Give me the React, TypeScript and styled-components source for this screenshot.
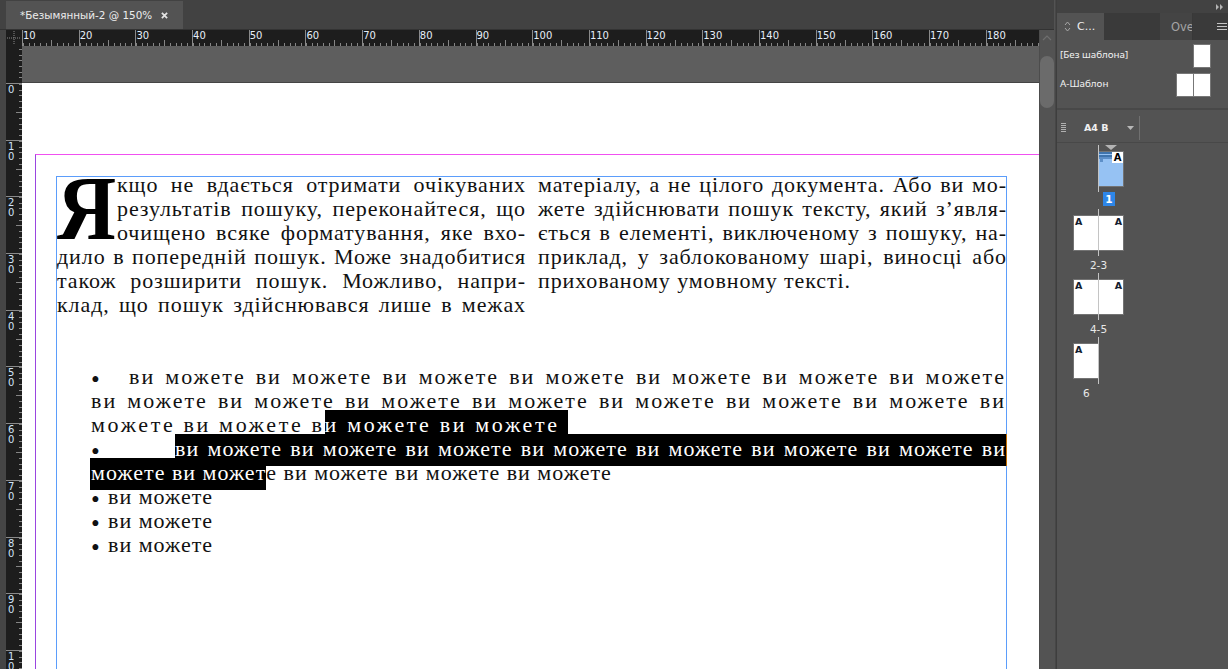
import React from 'react';
import styled, {createGlobalStyle} from "styled-components";

const GlobalStyle = createGlobalStyle`
  html, body {
    margin: 0;
    padding: 0;
    background: #535353;
    overflow: hidden;
  }
  * {
    box-sizing: border-box;
  }
`

const UI_FONT = `"DejaVu Sans", sans-serif`
const PANEL_FONT = `"Noto Sans", sans-serif`
const DOC_FONT = `"Liberation Serif", serif`
const RULER_STEP = 56.7

const H_MARKS = [10, 20, 30, 40, 50, 60, 70, 80, 90, 100, 110, 120, 130, 140, 150, 160, 170, 180]
const V_MARKS = [0, 10, 20, 30, 40, 50, 60, 70, 80, 90, 100]

const LEFT_COLUMN = [
    "кщо не вдається отримати очікуваних",
    "результатів пошуку, переконайтеся, що",
    "очищено всяке форматування, яке вхо-",
    "дило в попередній пошук. Може знадобитися",
    "також розширити пошук. Можливо, напри-",
    "клад, що пошук здійснювався лише в межах",
]

const RIGHT_COLUMN = [
    "матеріалу, а не цілого документа. Або ви мо-",
    "жете здійснювати пошук тексту, який з’явля-",
    "ється в елементі, виключеному з пошуку, на-",
    "приклад, у заблокованому шарі, виносці або",
]

const SEVEN = "ви можете ви можете ви можете ви можете ви можете ви можете ви можете"

export default function App() {
    return (
        <Screen>
            <GlobalStyle/>
            <DocColumn>
                <TabBar>
                    <Tab>
                        <TabTitle>*Безымянный-2 @ 150%</TabTitle>
                        <TabClose viewBox="0 0 8 8">
                            <path d="M1 1 L7 7 M7 1 L1 7" stroke="#e4e4e4" strokeWidth="2"/>
                        </TabClose>
                    </Tab>
                </TabBar>
                <Workspace>
                    <Gutter/>
                    <RulerGrid>
                        <Corner>
                            <svg width="14" height="14" viewBox="0 0 14 14">
                                <path d="M0 7 H14 M7 0 V14" stroke="#8a8a8a" strokeDasharray="1 1" fill="none"/>
                            </svg>
                        </Corner>
                        <HRuler>
                            {H_MARKS.map(mark => (
                                <HCell key={mark}>{mark}</HCell>
                            ))}
                        </HRuler>
                        <VRuler>
                            <VStub/>
                            {V_MARKS.map(mark => (
                                <VCell key={mark}>
                                    {String(mark).split("").map((digit, i) => <span key={i}>{digit}</span>)}
                                </VCell>
                            ))}
                        </VRuler>
                        <Viewport>
                            <Pasteboard/>
                            <Page>
                                <MarginGuide>
                                    <TextFrame>
                                        <Columns>
                                            <Column>
                                                <DropCap>Я</DropCap>
                                                {LEFT_COLUMN.map(line => <Line key={line}>{line}</Line>)}
                                            </Column>
                                            <Column>
                                                {RIGHT_COLUMN.map(line => <Line key={line}>{line}</Line>)}
                                                <LastLine>прихованому умовному тексті.</LastLine>
                                            </Column>
                                        </Columns>
                                        <BulletList>
                                            <BulletRow>
                                                <Bullet $width={38}>•</Bullet>
                                                <WideLine>{SEVEN}</WideLine>
                                            </BulletRow>
                                            <WideLine>{SEVEN} ви</WideLine>
                                            <WideLast>
                                                можете ви можете в<Selected>и можете ви можете </Selected>
                                            </WideLast>
                                            <BulletRow>
                                                <Bullet $width={84}>•</Bullet>
                                                <SelectedLine>
                                                    <Selected $edge>{SEVEN} ви</Selected>
                                                </SelectedLine>
                                            </BulletRow>
                                            <PlainLast>
                                                <Selected $first>можете ви может</Selected>е ви можете ви можете ви можете
                                            </PlainLast>
                                            <BulletRow>
                                                <Bullet $width={17}>•</Bullet>
                                                <PlainLast>ви можете</PlainLast>
                                            </BulletRow>
                                            <BulletRow>
                                                <Bullet $width={17}>•</Bullet>
                                                <PlainLast>ви можете</PlainLast>
                                            </BulletRow>
                                            <BulletRow>
                                                <Bullet $width={17}>•</Bullet>
                                                <PlainLast>ви можете</PlainLast>
                                            </BulletRow>
                                        </BulletList>
                                    </TextFrame>
                                </MarginGuide>
                            </Page>
                        </Viewport>
                    </RulerGrid>
                    <ScrollTrack>
                        <ScrollArrow viewBox="0 0 10 6">
                            <path d="M1 5 L5 1 L9 5" stroke="#6f6f6f" strokeWidth="1.2" fill="none"/>
                        </ScrollArrow>
                        <ScrollThumb/>
                    </ScrollTrack>
                </Workspace>
            </DocColumn>

            <Panel>
                <PanelStrip>
                    <svg width="8" height="6" viewBox="0 0 8 6">
                        <path d="M0 0 L3 3 L0 6 Z M4 0 L7 3 L4 6 Z" fill="#b4b4b4"/>
                    </svg>
                </PanelStrip>
                <PanelTabs>
                    <ActiveTab>
                        <svg width="7" height="11" viewBox="0 0 7 11">
                            <path d="M1 4 L3.5 1 L6 4 M1 7 L3.5 10 L6 7" stroke="#a8a8a8" fill="none"/>
                        </svg>
                        С...
                    </ActiveTab>
                    <TabSpacer/>
                    <InactiveTab>Ove</InactiveTab>
                    <MenuIcon viewBox="0 0 10 7">
                        <path d="M0 .5 H10 M0 3.5 H10 M0 6.5 H10" stroke="#c4c4c4"/>
                    </MenuIcon>
                </PanelTabs>
                <MasterList>
                    <MasterRow>
                        <MasterName>[Без шаблона]</MasterName>
                        <MasterSheet/>
                    </MasterRow>
                    <MasterRow>
                        <MasterName>А-Шаблон</MasterName>
                        <MasterSheet/>
                        <MasterSheet $joined/>
                    </MasterRow>
                </MasterList>
                <SizeBar>
                    <Grip viewBox="0 0 5 9">
                        <path d="M0 .5 H5 M0 2.5 H5 M0 4.5 H5 M0 6.5 H5 M0 8.5 H5" stroke="#b0b0b0"/>
                    </Grip>
                    <SizeName>А4 В</SizeName>
                    <Caret viewBox="0 0 7 4">
                        <path d="M0 0 H7 L3.5 4 Z" fill="#b8b8b8"/>
                    </Caret>
                    <SizeDivider/>
                </SizeBar>
                <SpreadList>
                    <Spread>
                        <SpreadRow>
                            <PageSlot/>
                            <Spine/>
                            <PageSlot>
                                <CurrentMarker viewBox="0 0 12 5">
                                    <path d="M0 0 H12 L6 5 Z" fill="#b4b4b4"/>
                                </CurrentMarker>
                                <ActiveSheet>
                                    <PreviewStripes viewBox="0 0 24 12">
                                        <path d="M0 0 H14 V2 H0 Z M0 3 H17 V5 H0 Z" fill="#3f74ad"/>
                                        <path d="M0 5 H20 V7 H0 Z M1 7 H4 V10 H1 Z" fill="#5d8fc8"/>
                                    </PreviewStripes>
                                    <ActiveMaster>A</ActiveMaster>
                                </ActiveSheet>
                            </PageSlot>
                        </SpreadRow>
                        <SpreadLabel><ActiveNumber>1</ActiveNumber></SpreadLabel>
                    </Spread>
                    <Spread>
                        <SpreadRow>
                            <PageSlot><Sheet><MasterMark>A</MasterMark></Sheet></PageSlot>
                            <Spine/>
                            <PageSlot><Sheet $right><MasterMark>A</MasterMark></Sheet></PageSlot>
                        </SpreadRow>
                        <SpreadLabel>2-3</SpreadLabel>
                    </Spread>
                    <Spread>
                        <SpreadRow>
                            <PageSlot><Sheet><MasterMark>A</MasterMark></Sheet></PageSlot>
                            <Spine/>
                            <PageSlot><Sheet $right><MasterMark>A</MasterMark></Sheet></PageSlot>
                        </SpreadRow>
                        <SpreadLabel>4-5</SpreadLabel>
                    </Spread>
                    <Spread>
                        <SpreadRow>
                            <PageSlot><Sheet><MasterMark>A</MasterMark></Sheet></PageSlot>
                            <Spine/>
                            <PageSlot/>
                        </SpreadRow>
                        <SpreadLabel $left>6</SpreadLabel>
                    </Spread>
                </SpreadList>
            </Panel>
        </Screen>
    );
};


const Screen = styled.div`
  width: 1228px;
  height: 669px;
  display: flex;
  overflow: hidden;
  background: #535353;
  font-family: ${UI_FONT};
`

const DocColumn = styled.div`
  width: 1054px;
  display: flex;
  flex-direction: column;
`

const TabBar = styled.div`
  height: 30px;
  padding: 1px 0 0 6px;
  background: #424242;
  display: flex;
  border-bottom: 1px solid #333;
`

const Tab = styled.div`
  width: 177px;
  background: #535353;
  display: flex;
  align-items: center;
  padding-left: 14px;
`

const TabTitle = styled.span`
  color: #ececec;
  font-size: 10.4px;
  width: 141px;
  white-space: nowrap;
`

const TabClose = styled.svg`
  width: 7px;
  height: 7px;
`

const Workspace = styled.div`
  flex: 1;
  display: flex;
  min-height: 0;
`

const Gutter = styled.div`
  width: 6px;
  background: #454545;
`

const RulerGrid = styled.div`
  width: 1033px;
  display: grid;
  grid-template-columns: 16px 1fr;
  grid-template-rows: 16px 1fr;
  min-height: 0;
`

const Corner = styled.div`
  background: #1d1d1d;
  display: flex;
  align-items: center;
  justify-content: center;
`

const HRuler = styled.div`
  background: #1d1d1d;
  display: flex;
  overflow: hidden;
`

const HCell = styled.div`
  flex: 0 0 ${RULER_STEP}px;
  height: 16px;
  border-left: 1px solid #8a8a8a;
  color: #e6eef8;
  font-size: 10px;
  line-height: 11px;
  background-image:
    repeating-linear-gradient(90deg, #858585 0 1px, transparent 1px ${RULER_STEP / 10}px),
    linear-gradient(90deg, transparent 27.6px, #858585 27.6px 28.6px, transparent 28.6px);
  background-size: 100% 3px, 100% 6px;
  background-position: 0 100%, 0 100%;
  background-repeat: no-repeat;
`

const VRuler = styled.div`
  background: #1d1d1d;
  display: flex;
  flex-direction: column;
  overflow: hidden;
  min-height: 0;
`

const VStub = styled.div`
  flex: 0 0 37px;
  background-image: repeating-linear-gradient(0deg, transparent 0 4.67px, #858585 4.67px 5.67px);
  background-size: 3px 100%;
  background-position: 100% 0;
  background-repeat: no-repeat;
`

const VCell = styled.div`
  flex: 0 0 ${RULER_STEP}px;
  border-top: 1px solid #8a8a8a;
  padding: 1px 0 0 2px;
  display: flex;
  flex-direction: column;
  color: #cfe3f8;
  font-size: 10px;
  line-height: 10px;
  background-image:
    repeating-linear-gradient(180deg, #858585 0 1px, transparent 1px ${RULER_STEP / 10}px),
    linear-gradient(180deg, transparent 27.6px, #858585 27.6px 28.6px, transparent 28.6px);
  background-size: 3px 100%, 6px 100%;
  background-position: 100% 0, 100% 0;
  background-repeat: no-repeat;
`

const Viewport = styled.div`
  display: flex;
  flex-direction: column;
  min-height: 0;
  overflow: hidden;
`

const Pasteboard = styled.div`
  flex: 0 0 37px;
  background: #5e5e5e;
  border-bottom: 1px solid #444;
`

const Page = styled.div`
  flex: 1;
  background: #fff;
  display: flex;
  padding: 71px 0 0 13px;
  min-height: 0;
`

const MarginGuide = styled.div`
  flex: 1;
  display: flex;
  padding: 21px 0 0 20px;
  border-top: 1px solid #f050f0;
  border-left: 1px solid #9a45e0;
`

const TextFrame = styled.div`
  width: 951px;
  border: 1px solid #5b9dfb;
  border-bottom: none;
  color: #111;
  font-family: ${DOC_FONT};
  font-size: 22px;
  line-height: 24px;
  letter-spacing: 0.9px;
`

const Columns = styled.div`
  display: flex;
  gap: 12px;
  margin-top: -4px;
`

const Column = styled.div`
  flex: 0 0 469px;
`

const DropCap = styled.div`
  float: left;
  width: 60px;
  height: 72px;
  font-size: 92px;
  font-weight: bold;
  letter-spacing: 0;
  line-height: 70px;
  color: #000;
  transform: scaleX(0.89);
  transform-origin: 0 0;
`

const Line = styled.div`
  text-align: justify;
  text-align-last: justify;
`

const LastLine = styled.div`
  text-align: left;
`

const BulletList = styled.div`
  margin-top: 48px;
  padding-left: 34px;
  letter-spacing: 1px;
`

const BulletRow = styled.div`
  display: flex;
`

const Bullet = styled.span<{ $width: number }>`
  flex: 0 0 ${props => props.$width}px;
  height: 24px;
  font-size: 25px;
  line-height: 29px;
  letter-spacing: 0;
`

const WideLine = styled.div`
  flex: 1;
  letter-spacing: 2px;
  text-align: justify;
  text-align-last: justify;
`

const WideLast = styled.div`
  letter-spacing: 2.65px;
`

const SelectedLine = styled.div`
  flex: 1;
  text-align: justify;
  text-align-last: justify;
`

const PlainLast = styled.div`
  white-space: pre-wrap;
`

const Selected = styled.span<{ $edge?: boolean; $first?: boolean }>`
  background: #000;
  color: #fff;
  padding: 2px 0 5px;
  white-space: pre-wrap;
  ${props => props.$edge && `box-shadow: 1px 0 0 #c46f00;`}
  ${props => props.$first && `margin-left: -1px; padding-left: 1px;`}
`

const ScrollTrack = styled.div`
  flex: 1;
  background: #535353;
  display: flex;
  flex-direction: column;
  align-items: center;
  padding-top: 5px;
  border-left: 1px solid #4c4c4c;
`

const ScrollArrow = styled.svg`
  width: 10px;
  height: 6px;
`

const ScrollThumb = styled.div`
  width: 14px;
  height: 52px;
  margin-top: 15px;
  border-radius: 7px;
  background: #6b6b6b;
`

const Panel = styled.div`
  flex: 1;
  display: flex;
  flex-direction: column;
  margin-left: 2px;
  border-left: 1px solid #3e3e3e;
  box-shadow: -1px 0 0 #474747;
  color: #e4e4e4;
  font-size: 10px;
`

const PanelStrip = styled.div`
  height: 13px;
  background: #424242;
  display: flex;
  align-items: center;
  justify-content: flex-end;
  padding-right: 4px;
`

const PanelTabs = styled.div`
  height: 27px;
  background: #3a3a3a;
  display: flex;
`

const ActiveTab = styled.div`
  width: 47px;
  background: #535353;
  display: flex;
  align-items: center;
  gap: 6px;
  padding-left: 7px;
  font-size: 11px;
  color: #eee;
`

const TabSpacer = styled.div`
  width: 56px;
`

const InactiveTab = styled.div`
  width: 33px;
  background: #444;
  border-right: 1px solid #383838;
  display: flex;
  align-items: center;
  padding-left: 11px;
  overflow: hidden;
  color: #a4a4a4;
  font-size: 11.5px;
`

const MenuIcon = styled.svg`
  width: 10px;
  height: 7px;
  margin: 10px 0 0 24px;
`

const MasterList = styled.div`
  height: 70px;
  padding: 1px 17px 0 3px;
  border-bottom: 2px solid #484848;
  display: flex;
  flex-direction: column;
`

const MasterRow = styled.div`
  height: 29px;
  display: flex;
  align-items: center;
`

const MasterName = styled.span`
  flex: 1;
  margin-bottom: 3px;
  color: #f0f0f0;
  font-family: ${PANEL_FONT};
  font-size: 9.8px;
`

const MasterSheet = styled.div<{ $joined?: boolean }>`
  width: 18px;
  height: 24px;
  background: #fff;
  border: 1px solid #777;
  ${props => props.$joined && `margin-left: -1px;`}
`

const SizeBar = styled.div`
  height: 33px;
  padding: 3px 0 0 4px;
  border-bottom: 1px solid #484848;
  display: flex;
  align-items: center;
`

const Grip = styled.svg`
  width: 5px;
  height: 9px;
`

const SizeName = styled.span`
  width: 43px;
  margin-left: 18px;
  color: #f0f0f0;
  font-size: 9.5px;
  font-weight: bold;
`

const Caret = styled.svg`
  width: 7px;
  height: 4px;
`

const SizeDivider = styled.div`
  width: 1px;
  height: 24px;
  margin-left: 5px;
  background: #707070;
`

const SpreadList = styled.div`
  padding: 2px 0 0 16px;
  display: flex;
  flex-direction: column;
`

const Spread = styled.div`
  width: 51px;
  height: 64px;
  display: flex;
  flex-direction: column;
`

const SpreadRow = styled.div`
  height: 47px;
  display: flex;
`

const PageSlot = styled.div`
  position: relative;
  flex: 0 0 25px;
  display: flex;
  align-items: center;
`

const Spine = styled.div`
  flex: 0 0 1px;
  background: #c4c4c4;
`

const Sheet = styled.div<{ $right?: boolean }>`
  position: relative;
  width: 100%;
  height: 36px;
  background: #fff;
  border: 1px solid #737373;
  ${props => props.$right ? `border-left: none; text-align: right;` : `border-right: none;`}
`

const ActiveSheet = styled.div`
  position: relative;
  width: 100%;
  height: 36px;
  background: #96c2f3;
  border: 1px solid #737373;
  border-left: none;
`

const PreviewStripes = styled.svg`
  position: absolute;
  top: 0;
  left: 0;
  width: 24px;
  height: 12px;
`

const ActiveMaster = styled.span`
  position: absolute;
  top: 0;
  right: 0;
  width: 11px;
  height: 11px;
  background: #fff;
  color: #000;
  font-size: 10px;
  font-weight: bold;
  line-height: 11px;
  text-align: center;
`

const CurrentMarker = styled.svg`
  position: absolute;
  top: 0;
  left: 6px;
  width: 12px;
  height: 5px;
`

const MasterMark = styled.span`
  display: block;
  padding: 0 1px;
  color: #141e30;
  font-size: 9.5px;
  font-weight: bold;
  line-height: 11px;
`

const SpreadLabel = styled.div<{ $left?: boolean }>`
  height: 17px;
  display: flex;
  align-items: center;
  justify-content: ${props => props.$left ? "flex-start" : "center"};
  padding-left: ${props => props.$left ? "10px" : "0"};
  color: #e8e8e8;
  font-size: 10.5px;
`

const ActiveNumber = styled.span`
  width: 12px;
  height: 14px;
  margin: 0 0 3px 21px;
  background: #2d86e8;
  color: #fff;
  font-weight: bold;
  line-height: 14px;
  text-align: center;
`
